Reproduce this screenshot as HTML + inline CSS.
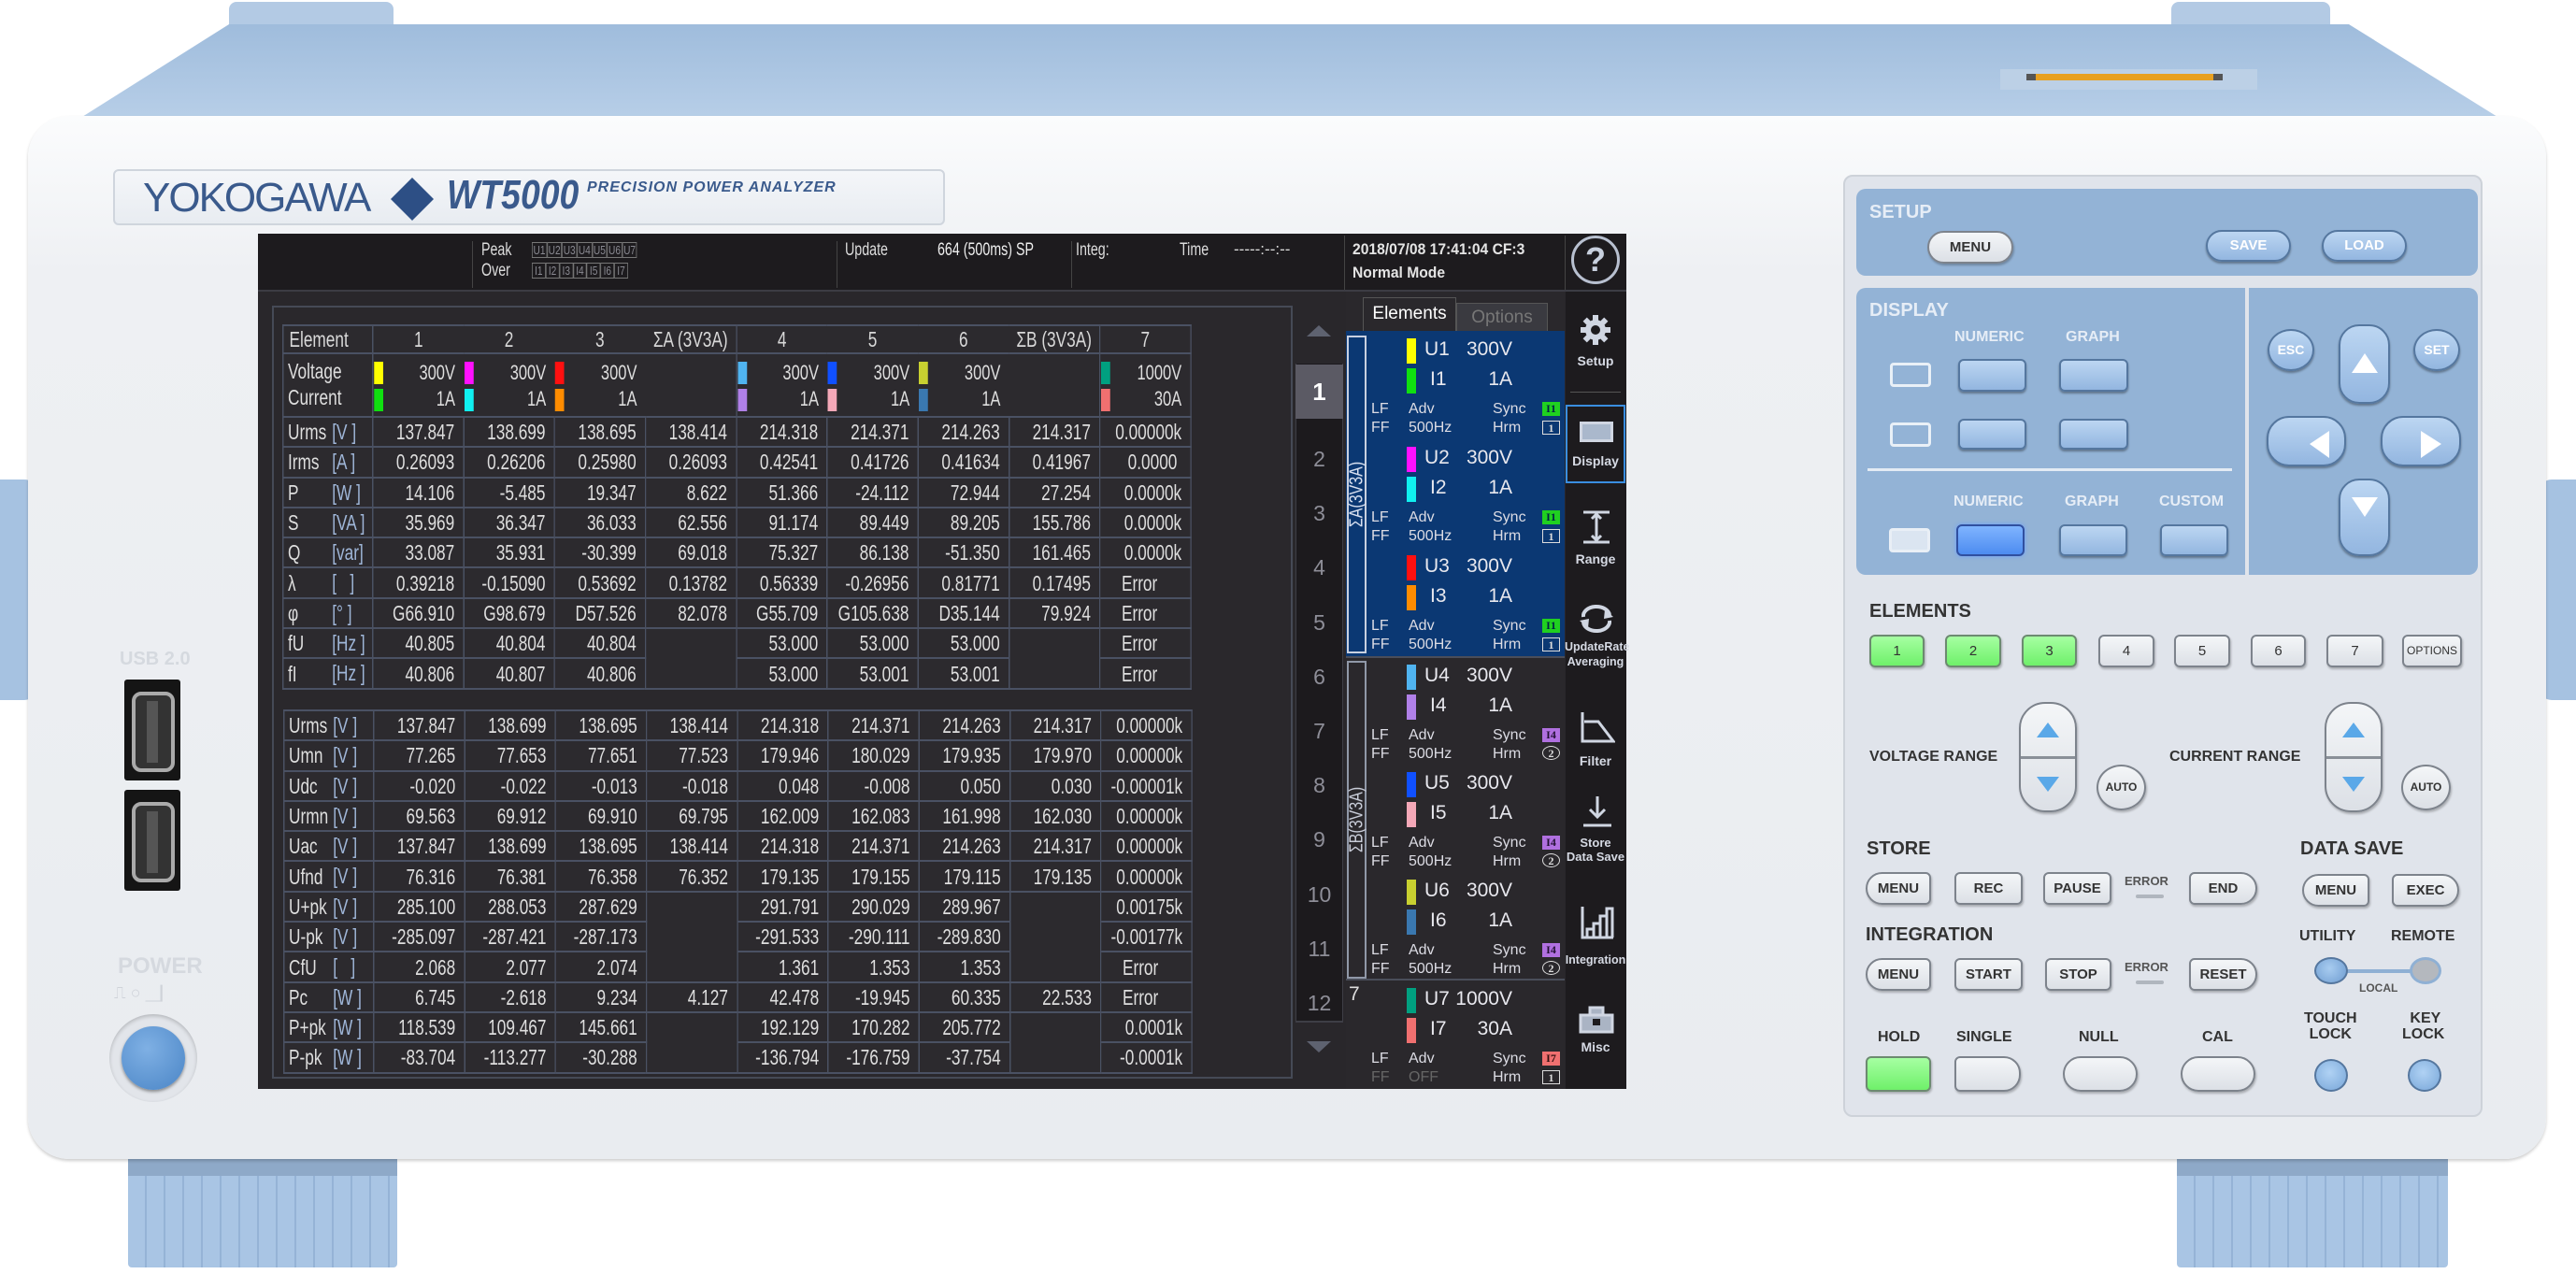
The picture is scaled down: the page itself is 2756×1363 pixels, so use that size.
<!DOCTYPE html>
<html><head><meta charset="utf-8">
<style>
*{margin:0;padding:0;box-sizing:border-box}
body{width:2756px;height:1363px;background:#fff;position:relative;overflow:hidden;font-family:"Liberation Sans",sans-serif}
.a{position:absolute}
.t{position:absolute;white-space:pre}
table{border-collapse:collapse;table-layout:fixed}
.tb td{border:2px solid #4a5163;color:#dedede;font-size:23px;height:32.3px;text-align:right;padding-right:12px;white-space:pre;line-height:28px;background:#2c2a2e;position:relative}
.tb td.l{text-align:left;padding-left:6px;padding-right:0}
.tb td.l span{position:absolute;left:69px;top:1px;color:#9fb6d8}
.tb td.e{text-align:left;padding-left:30px}
.tb tr.h td{height:27px;text-align:center;padding:0;color:#d8d8d8}
.tb td.nb{border-left-style:hidden}
.tb tr.vc td{height:68px}
.bar{position:absolute;width:13px;height:24px;left:1px}
.v1,.v2{position:absolute;right:12px;font-size:22px}
.v1{top:6px}.v2{top:34px}
.ep{position:absolute;left:1440px;width:233px;height:116px;color:#e8e8ee}
.ep .cb{position:absolute;left:65px;width:10px;height:27px}
.ep .n{position:absolute;font-size:21px;line-height:28px}
.ep .s{position:absolute;font-size:16px;line-height:20px;color:#dcdce4}
.ep .bd{position:absolute;left:210px;width:19px;height:15px;font:bold 12px "Liberation Serif",serif;text-align:center;line-height:15px}
.mn{position:absolute;left:1674px;width:66px;text-align:center;color:#d6dae4;font-weight:bold;font-size:14px;line-height:17px}
.lb{position:absolute;font-weight:bold;white-space:pre}
.btn{position:absolute;border-radius:6px;font-weight:bold;font-size:15px;text-align:center;color:#333}
.bb{background:linear-gradient(#bcd6f2,#93b6e0);border:2px solid #55779f;box-shadow:0 2px 2px rgba(0,0,0,.35)}
.gb{background:linear-gradient(#f4f6f8,#dce0e6);border:2px solid #7d838c;box-shadow:1px 2px 2px rgba(0,0,0,.25)}
.gr{background:linear-gradient(#a6ffa2,#6ff06a);border:2px solid #6c8a70;box-shadow:1px 2px 2px rgba(0,0,0,.25)}
.sq{position:absolute;width:44px;height:26px;border:3px solid #fff;border-radius:4px;opacity:.8}
</style></head><body>

<!-- lid -->
<svg class="a" style="left:0;top:0" width="2756" height="140">
<defs><linearGradient id="lg" x1="0" y1="0" x2="0" y2="1"><stop offset="0" stop-color="#9fbcdc"/><stop offset="1" stop-color="#b8cfe8"/></linearGradient></defs>
<rect x="245" y="2" width="176" height="36" rx="8" fill="#b3cae4"/>
<rect x="2323" y="2" width="170" height="36" rx="8" fill="#b3cae4"/>
<polygon points="80,130 245,26 2513,26 2680,130" fill="url(#lg)"/>
<rect x="2140" y="74" width="275" height="22" fill="#bcd0e6"/>
<rect x="2168" y="79" width="210" height="7" fill="#e8a020"/>
<rect x="2168" y="79" width="10" height="7" fill="#555"/><rect x="2368" y="79" width="10" height="7" fill="#555"/>
</svg>
<!-- side bumpers -->
<div class="a" style="left:0;top:513px;width:40px;height:236px;background:#a6c2e1;border-radius:0 14px 14px 0"></div>
<div class="a" style="left:2716px;top:513px;width:40px;height:236px;background:#a6c2e1;border-radius:14px 0 0 14px"></div>
<!-- feet -->
<div class="a" style="left:137px;top:1236px;width:288px;height:120px;background:repeating-linear-gradient(90deg,#a9c5e4 0 18px,#95b3d6 18px 20px);border-radius:4px"></div>
<div class="a" style="left:2329px;top:1236px;width:290px;height:120px;background:repeating-linear-gradient(90deg,#a9c5e4 0 18px,#95b3d6 18px 20px);border-radius:4px"></div>
<div class="a" style="left:137px;top:1236px;width:288px;height:22px;background:#8ea9c8"></div>
<div class="a" style="left:2329px;top:1236px;width:290px;height:22px;background:#8ea9c8"></div>
<!-- front panel -->
<div class="a" style="left:30px;top:124px;width:2694px;height:1116px;background:linear-gradient(#fbfcfd,#eef0f3 15%,#e9ecf0);border-radius:44px;box-shadow:0 2px 3px rgba(0,0,0,.2)"></div>
<!-- logo plate -->
<div class="a" style="left:121px;top:181px;width:890px;height:60px;background:linear-gradient(#f4f6f9,#e8ecf1);border:2px solid #cfd5dd;border-radius:6px"></div>
<div class="t" style="left:153px;top:187px;font-size:44px;color:#3a5a8c;letter-spacing:-2px">YOKOGAWA</div>
<svg class="a" style="left:418px;top:190px" width="46" height="46"><polygon points="23,0 46,23 23,46 0,23" fill="#2d4f85"/></svg>
<div class="t" style="left:478px;top:184px;font-size:44px;font-weight:bold;font-style:italic;color:#3a5a8c;transform:scaleX(.85);transform-origin:left">WT5000</div>
<div class="t" style="left:628px;top:192px;font-size:16px;font-weight:bold;font-style:italic;color:#3a5a8c;letter-spacing:1px">PRECISION POWER ANALYZER</div>

<!-- left: USB & power -->
<div class="t" style="left:128px;top:694px;font-size:20px;font-weight:bold;color:#d5d9df">USB 2.0</div>
<div class="a" style="left:133px;top:727px;width:60px;height:108px;background:#151515;border-radius:3px"></div>
<div class="a" style="left:141px;top:740px;width:46px;height:86px;border:4px solid #aaa;border-radius:10px;background:#333"></div>
<div class="a" style="left:157px;top:750px;width:12px;height:66px;background:#555"></div>
<div class="a" style="left:133px;top:845px;width:60px;height:108px;background:#151515;border-radius:3px"></div>
<div class="a" style="left:141px;top:858px;width:46px;height:86px;border:4px solid #aaa;border-radius:10px;background:#333"></div>
<div class="a" style="left:157px;top:868px;width:12px;height:66px;background:#555"></div>
<div class="t" style="left:126px;top:1020px;font-size:24px;font-weight:bold;color:#d5d9df">POWER</div>
<div class="t" style="left:122px;top:1052px;font-size:18px;color:#cfd3d9">⎍ ○ ⎽▏</div>
<div class="a" style="left:117px;top:1085px;width:94px;height:94px;border-radius:50%;background:#e2e5ea;box-shadow:inset 0 2px 4px rgba(0,0,0,.2)"></div>
<div class="a" style="left:130px;top:1098px;width:68px;height:68px;border-radius:50%;background:radial-gradient(circle at 40% 35%,#7fb0e4,#4a85c6);box-shadow:0 2px 3px rgba(0,0,0,.4)"></div>

<!-- SCREEN -->
<div class="a" style="left:276px;top:250px;width:1464px;height:915px;background:#29272b"></div>
<div class="a" style="left:276px;top:250px;width:1464px;height:62px;background:#1d1b1e;border-bottom:2px solid #3c3c44"></div>
<div class="a" style="left:505px;top:258px;width:1px;height:50px;background:#444"></div>
<div class="a" style="left:895px;top:258px;width:1px;height:50px;background:#444"></div>
<div class="a" style="left:1146px;top:258px;width:1px;height:50px;background:#444"></div>
<div class="a" style="left:1438px;top:252px;width:1px;height:58px;background:#444"></div>
<div class="a" style="left:1674px;top:252px;width:1px;height:58px;background:#444"></div>
<div class="t" style="left:515px;top:257px;font-size:19px;color:#ddd;transform:scaleX(.75);transform-origin:left">Peak</div>
<div class="t" style="left:515px;top:279px;font-size:19px;color:#ddd;transform:scaleX(.75);transform-origin:left">Over</div>
<div class="t" style="left:569px;top:260px;font-size:13px;color:#8a8a92;letter-spacing:0;transform:scaleX(.78);transform-origin:left"><span style="border:1px solid #777;padding:0 1px">U1</span><span style="border:1px solid #777;padding:0 1px">U2</span><span style="border:1px solid #777;padding:0 1px">U3</span><span style="border:1px solid #777;padding:0 1px">U4</span><span style="border:1px solid #777;padding:0 1px">U5</span><span style="border:1px solid #777;padding:0 1px">U6</span><span style="border:1px solid #777;padding:0 1px">U7</span></div>
<div class="t" style="left:569px;top:282px;font-size:13px;color:#8a8a92;transform:scaleX(.78);transform-origin:left"><span style="border:1px solid #777;padding:0 3px">I1</span><span style="border:1px solid #777;padding:0 3px">I2</span><span style="border:1px solid #777;padding:0 3px">I3</span><span style="border:1px solid #777;padding:0 3px">I4</span><span style="border:1px solid #777;padding:0 3px">I5</span><span style="border:1px solid #777;padding:0 3px">I6</span><span style="border:1px solid #777;padding:0 3px">I7</span></div>
<div class="t" style="left:904px;top:257px;font-size:19px;color:#ddd;transform:scaleX(.75);transform-origin:left">Update</div>
<div class="t" style="left:1003px;top:257px;font-size:19px;color:#eee;transform:scaleX(.75);transform-origin:left">664 (500ms) SP</div>
<div class="t" style="left:1151px;top:257px;font-size:19px;color:#ddd;transform:scaleX(.75);transform-origin:left">Integ:</div>
<div class="t" style="left:1262px;top:257px;font-size:19px;color:#ddd;transform:scaleX(.75);transform-origin:left">Time</div>
<div class="t" style="left:1320px;top:257px;font-size:17px;color:#ddd">-----:--:--</div>
<div class="t" style="left:1447px;top:257px;font-size:17px;color:#e4e4e4;font-weight:bold;transform:scaleX(.92);transform-origin:left">2018/07/08 17:41:04 CF:3</div>
<div class="t" style="left:1447px;top:282px;font-size:17px;color:#e4e4e4;font-weight:bold;transform:scaleX(.92);transform-origin:left">Normal Mode</div>
<div class="a" style="left:1681px;top:252px;width:52px;height:52px;border:3px solid #b8c0d0;border-radius:50%;color:#c8d0de;font-size:36px;font-weight:bold;text-align:center;line-height:46px">?</div>

<!-- numeric panel border -->
<div class="a" style="left:291px;top:327px;width:1092px;height:827px;border:2px solid #454a56;background:#2a282c"></div>

<div class="a" style="left:302px;top:347px;width:1295px;transform:scaleX(.75);transform-origin:left top">
<table class="tb" style="width:1295px">
<colgroup><col style="width:128px"><col span="9" style="width:129.67px"></colgroup>
<tr class="h"><td style="text-align:left;padding-left:8px">Element</td><td>1</td><td class="nb">2</td><td class="nb">3</td><td class="nb">ΣA (3V3A)</td><td>4</td><td class="nb">5</td><td class="nb">6</td><td class="nb">ΣB (3V3A)</td><td>7</td></tr>
<tr class="vc"><td class="l" style="line-height:28px;padding-top:4px;vertical-align:top">Voltage<br>Current</td>
<td><i class="bar" style="top:8px;background:#ffff00"></i><i class="bar" style="top:37px;background:#10e010"></i><b class="v1" style="font-weight:normal">300V</b><b class="v2" style="font-weight:normal">1A</b></td>
<td class="nb"><i class="bar" style="top:8px;background:#ff10ff"></i><i class="bar" style="top:37px;background:#10f0f0"></i><b class="v1" style="font-weight:normal">300V</b><b class="v2" style="font-weight:normal">1A</b></td>
<td class="nb"><i class="bar" style="top:8px;background:#ff1010"></i><i class="bar" style="top:37px;background:#ff8c00"></i><b class="v1" style="font-weight:normal">300V</b><b class="v2" style="font-weight:normal">1A</b></td>
<td class="nb"></td>
<td><i class="bar" style="top:8px;background:#50b4f0"></i><i class="bar" style="top:37px;background:#b080e8"></i><b class="v1" style="font-weight:normal">300V</b><b class="v2" style="font-weight:normal">1A</b></td>
<td class="nb"><i class="bar" style="top:8px;background:#1050ff"></i><i class="bar" style="top:37px;background:#f4a8b8"></i><b class="v1" style="font-weight:normal">300V</b><b class="v2" style="font-weight:normal">1A</b></td>
<td class="nb"><i class="bar" style="top:8px;background:#c8d030"></i><i class="bar" style="top:37px;background:#3a78b0"></i><b class="v1" style="font-weight:normal">300V</b><b class="v2" style="font-weight:normal">1A</b></td>
<td class="nb"></td>
<td><i class="bar" style="top:8px;background:#00a080"></i><i class="bar" style="top:37px;background:#f07070"></i><b class="v1" style="font-weight:normal">1000V</b><b class="v2" style="font-weight:normal">30A</b></td></tr>
<tr><td class="l">Urms<span>[V ]</span></td><td>137.847</td><td>138.699</td><td>138.695</td><td>138.414</td><td>214.318</td><td>214.371</td><td>214.263</td><td>214.317</td><td>0.00000k</td></tr>
<tr><td class="l">Irms<span>[A ]</span></td><td>0.26093</td><td>0.26206</td><td>0.25980</td><td>0.26093</td><td>0.42541</td><td>0.41726</td><td>0.41634</td><td>0.41967</td><td>0.0000 </td></tr>
<tr><td class="l">P<span>[W ]</span></td><td>14.106</td><td>-5.485</td><td>19.347</td><td>8.622</td><td>51.366</td><td>-24.112</td><td>72.944</td><td>27.254</td><td>0.0000k</td></tr>
<tr><td class="l">S<span>[VA ]</span></td><td>35.969</td><td>36.347</td><td>36.033</td><td>62.556</td><td>91.174</td><td>89.449</td><td>89.205</td><td>155.786</td><td>0.0000k</td></tr>
<tr><td class="l">Q<span>[var]</span></td><td>33.087</td><td>35.931</td><td>-30.399</td><td>69.018</td><td>75.327</td><td>86.138</td><td>-51.350</td><td>161.465</td><td>0.0000k</td></tr>
<tr><td class="l">λ<span>[   ]</span></td><td>0.39218</td><td>-0.15090</td><td>0.53692</td><td>0.13782</td><td>0.56339</td><td>-0.26956</td><td>0.81771</td><td>0.17495</td><td class="e">Error</td></tr>
<tr><td class="l">φ<span>[° ]</span></td><td>G66.910</td><td>G98.679</td><td>D57.526</td><td>82.078</td><td>G55.709</td><td>G105.638</td><td>D35.144</td><td>79.924</td><td class="e">Error</td></tr>
<tr><td class="l">fU<span>[Hz ]</span></td><td>40.805</td><td>40.804</td><td>40.804</td><td rowspan="2"></td><td>53.000</td><td>53.000</td><td>53.000</td><td rowspan="2"></td><td class="e">Error</td></tr>
<tr><td class="l">fI<span>[Hz ]</span></td><td>40.806</td><td>40.807</td><td>40.806</td><td>53.000</td><td>53.001</td><td>53.001</td><td class="e">Error</td></tr>
</table></div>

<div class="a" style="left:303px;top:759px;width:1295px;transform:scaleX(.75);transform-origin:left top">
<table class="tb" style="width:1295px">
<colgroup><col style="width:128px"><col span="9" style="width:129.67px"></colgroup>
<tr><td class="l">Urms<span>[V ]</span></td><td>137.847</td><td>138.699</td><td>138.695</td><td>138.414</td><td>214.318</td><td>214.371</td><td>214.263</td><td>214.317</td><td>0.00000k</td></tr>
<tr><td class="l">Umn<span>[V ]</span></td><td>77.265</td><td>77.653</td><td>77.651</td><td>77.523</td><td>179.946</td><td>180.029</td><td>179.935</td><td>179.970</td><td>0.00000k</td></tr>
<tr><td class="l">Udc<span>[V ]</span></td><td>-0.020</td><td>-0.022</td><td>-0.013</td><td>-0.018</td><td>0.048</td><td>-0.008</td><td>0.050</td><td>0.030</td><td>-0.00001k</td></tr>
<tr><td class="l">Urmn<span>[V ]</span></td><td>69.563</td><td>69.912</td><td>69.910</td><td>69.795</td><td>162.009</td><td>162.083</td><td>161.998</td><td>162.030</td><td>0.00000k</td></tr>
<tr><td class="l">Uac<span>[V ]</span></td><td>137.847</td><td>138.699</td><td>138.695</td><td>138.414</td><td>214.318</td><td>214.371</td><td>214.263</td><td>214.317</td><td>0.00000k</td></tr>
<tr><td class="l">Ufnd<span>[V ]</span></td><td>76.316</td><td>76.381</td><td>76.358</td><td>76.352</td><td>179.135</td><td>179.155</td><td>179.115</td><td>179.135</td><td>0.00000k</td></tr>
<tr><td class="l">U+pk<span>[V ]</span></td><td>285.100</td><td>288.053</td><td>287.629</td><td rowspan="3"></td><td>291.791</td><td>290.029</td><td>289.967</td><td rowspan="3"></td><td>0.00175k</td></tr>
<tr><td class="l">U-pk<span>[V ]</span></td><td>-285.097</td><td>-287.421</td><td>-287.173</td><td>-291.533</td><td>-290.111</td><td>-289.830</td><td>-0.00177k</td></tr>
<tr><td class="l">CfU<span>[   ]</span></td><td>2.068</td><td>2.077</td><td>2.074</td><td>1.361</td><td>1.353</td><td>1.353</td><td class="e">Error</td></tr>
<tr><td class="l">Pc<span>[W ]</span></td><td>6.745</td><td>-2.618</td><td>9.234</td><td>4.127</td><td>42.478</td><td>-19.945</td><td>60.335</td><td>22.533</td><td class="e">Error</td></tr>
<tr><td class="l">P+pk<span>[W ]</span></td><td>118.539</td><td>109.467</td><td>145.661</td><td rowspan="2"></td><td>192.129</td><td>170.282</td><td>205.772</td><td rowspan="2"></td><td>0.0001k</td></tr>
<tr><td class="l">P-pk<span>[W ]</span></td><td>-83.704</td><td>-113.277</td><td>-30.288</td><td>-136.794</td><td>-176.759</td><td>-37.754</td><td>-0.0001k</td></tr>
</table></div>

<!-- scroll column -->
<div class="a" style="left:1386px;top:327px;width:51px;height:827px;background:#1c1a1d;border:1px solid #3e3e46"></div>
<div class="a" style="left:1386px;top:327px;width:51px;height:62px;background:#29272b"></div>
<svg class="a" style="left:1396px;top:346px" width="30" height="16"><polygon points="15,2 28,14 2,14" fill="#5e6270"/></svg>
<div class="a" style="left:1386px;top:390px;width:51px;height:58px;background:#5b5a64;color:#fff;font-size:26px;font-weight:bold;text-align:center;line-height:58px">1</div>
<div class="a" style="left:1386px;top:1092px;width:51px;height:62px;background:#29272b;border-top:2px solid #3e3e46"></div>
<svg class="a" style="left:1396px;top:1112px" width="30" height="16"><polygon points="2,2 28,2 15,14" fill="#5e6270"/></svg>
<div class="a" style="left:1386px;top:462px;width:51px;color:#8e8e98;font-size:23px;text-align:center;line-height:58.2px">2<br>3<br>4<br>5<br>6<br>7<br>8<br>9<br>10<br>11<br>12</div>

<!-- element panel -->
<div class="a" style="left:1440px;top:312px;width:234px;height:853px;background:#2a282c"></div>
<div class="a" style="left:1458px;top:318px;width:100px;height:37px;background:#2a282c;border:1px solid #555;border-bottom:0;color:#fff;font-size:19px;text-align:center;line-height:34px">Elements</div>
<div class="a" style="left:1558px;top:324px;width:98px;height:31px;background:#3a3a40;border:1px solid #555;color:#777;font-size:19px;text-align:center;line-height:30px">Options</div>
<div class="a" style="left:1440px;top:354px;width:234px;height:348px;background:#0b3873"></div>
<div class="a" style="left:1440px;top:702px;width:234px;height:2px;background:#4a4e5a"></div>
<div class="a" style="left:1440px;top:1047px;width:234px;height:2px;background:#4a4e5a"></div>
<div class="a" style="left:1441px;top:359px;width:21px;height:340px;border:2px solid #c8d0e0"></div>
<div class="a" style="left:1441px;top:707px;width:21px;height:340px;border:2px solid #9098a8"></div>
<div class="t" style="left:1452px;top:529px;font-size:20px;color:#d8e0f0;transform:translate(-50%,-50%) rotate(-90deg) scaleX(.8)">ΣA(3V3A)</div>
<div class="t" style="left:1452px;top:877px;font-size:20px;color:#c8ccd8;transform:translate(-50%,-50%) rotate(-90deg) scaleX(.8)">ΣB(3V3A)</div>
<div class="t" style="left:1443px;top:1052px;font-size:21px;color:#ddd">7</div>

<div class="ep" style="top:354px"><i class="cb" style="top:8px;background:#ffff00"></i><i class="cb" style="top:40px;background:#10e010"></i><span class="n" style="left:84px;top:6px">U1</span><span class="n" style="left:90px;top:38px">I1</span><span class="n" style="left:100px;width:78px;text-align:right;top:6px">300V</span><span class="n" style="left:100px;width:78px;text-align:right;top:38px">1A</span><span class="s" style="left:27px;top:74px">LF<br>FF</span><span class="s" style="left:67px;top:74px">Adv<br>500Hz</span><span class="s" style="left:157px;top:74px">Sync<br>Hrm</span><span class="bd" style="top:76px;background:#20d020;color:#024">I1</span><span class="bd" style="top:96px;border:1px solid #ddd;color:#ddd">1</span></div>
<div class="ep" style="top:470px"><i class="cb" style="top:8px;background:#ff10ff"></i><i class="cb" style="top:40px;background:#10f0f0"></i><span class="n" style="left:84px;top:6px">U2</span><span class="n" style="left:90px;top:38px">I2</span><span class="n" style="left:100px;width:78px;text-align:right;top:6px">300V</span><span class="n" style="left:100px;width:78px;text-align:right;top:38px">1A</span><span class="s" style="left:27px;top:74px">LF<br>FF</span><span class="s" style="left:67px;top:74px">Adv<br>500Hz</span><span class="s" style="left:157px;top:74px">Sync<br>Hrm</span><span class="bd" style="top:76px;background:#20d020;color:#024">I1</span><span class="bd" style="top:96px;border:1px solid #ddd;color:#ddd">1</span></div>
<div class="ep" style="top:586px"><i class="cb" style="top:8px;background:#ff1010"></i><i class="cb" style="top:40px;background:#ff8c00"></i><span class="n" style="left:84px;top:6px">U3</span><span class="n" style="left:90px;top:38px">I3</span><span class="n" style="left:100px;width:78px;text-align:right;top:6px">300V</span><span class="n" style="left:100px;width:78px;text-align:right;top:38px">1A</span><span class="s" style="left:27px;top:74px">LF<br>FF</span><span class="s" style="left:67px;top:74px">Adv<br>500Hz</span><span class="s" style="left:157px;top:74px">Sync<br>Hrm</span><span class="bd" style="top:76px;background:#20d020;color:#024">I1</span><span class="bd" style="top:96px;border:1px solid #ddd;color:#ddd">1</span></div>
<div class="ep" style="top:703px"><i class="cb" style="top:8px;background:#50b4f0"></i><i class="cb" style="top:40px;background:#b080e8"></i><span class="n" style="left:84px;top:6px">U4</span><span class="n" style="left:90px;top:38px">I4</span><span class="n" style="left:100px;width:78px;text-align:right;top:6px">300V</span><span class="n" style="left:100px;width:78px;text-align:right;top:38px">1A</span><span class="s" style="left:27px;top:74px">LF<br>FF</span><span class="s" style="left:67px;top:74px">Adv<br>500Hz</span><span class="s" style="left:157px;top:74px">Sync<br>Hrm</span><span class="bd" style="top:76px;background:#b070e0;color:#213">I4</span><span class="bd" style="top:95px;border:1px solid #ddd;border-radius:50%;color:#ddd">2</span></div>
<div class="ep" style="top:818px"><i class="cb" style="top:8px;background:#1050ff"></i><i class="cb" style="top:40px;background:#f4a8b8"></i><span class="n" style="left:84px;top:6px">U5</span><span class="n" style="left:90px;top:38px">I5</span><span class="n" style="left:100px;width:78px;text-align:right;top:6px">300V</span><span class="n" style="left:100px;width:78px;text-align:right;top:38px">1A</span><span class="s" style="left:27px;top:74px">LF<br>FF</span><span class="s" style="left:67px;top:74px">Adv<br>500Hz</span><span class="s" style="left:157px;top:74px">Sync<br>Hrm</span><span class="bd" style="top:76px;background:#b070e0;color:#213">I4</span><span class="bd" style="top:95px;border:1px solid #ddd;border-radius:50%;color:#ddd">2</span></div>
<div class="ep" style="top:933px"><i class="cb" style="top:8px;background:#c8d030"></i><i class="cb" style="top:40px;background:#3a78b0"></i><span class="n" style="left:84px;top:6px">U6</span><span class="n" style="left:90px;top:38px">I6</span><span class="n" style="left:100px;width:78px;text-align:right;top:6px">300V</span><span class="n" style="left:100px;width:78px;text-align:right;top:38px">1A</span><span class="s" style="left:27px;top:74px">LF<br>FF</span><span class="s" style="left:67px;top:74px">Adv<br>500Hz</span><span class="s" style="left:157px;top:74px">Sync<br>Hrm</span><span class="bd" style="top:76px;background:#b070e0;color:#213">I4</span><span class="bd" style="top:95px;border:1px solid #ddd;border-radius:50%;color:#ddd">2</span></div>
<div class="ep" style="top:1049px"><i class="cb" style="top:8px;background:#00a080"></i><i class="cb" style="top:40px;background:#f07070"></i><span class="n" style="left:84px;top:6px">U7</span><span class="n" style="left:90px;top:38px">I7</span><span class="n" style="left:100px;width:78px;text-align:right;top:6px">1000V</span><span class="n" style="left:100px;width:78px;text-align:right;top:38px">30A</span><span class="s" style="left:27px;top:74px">LF<br><span style="color:#666">FF</span></span><span class="s" style="left:67px;top:74px">Adv<br><span style="color:#666">OFF</span></span><span class="s" style="left:157px;top:74px">Sync<br>Hrm</span><span class="bd" style="top:76px;background:#f07070;color:#311">I7</span><span class="bd" style="top:96px;border:1px solid #ddd;color:#ddd">1</span></div>

<!-- right menu -->
<div class="a" style="left:1675px;top:312px;width:65px;height:853px;background:#1d1b1e"></div>
<div class="a" style="left:1680px;top:419px;width:54px;height:1px;background:#555"></div>
<div class="a" style="left:1675px;top:433px;width:64px;height:84px;border:2px solid #3a8ee0"></div>
<svg class="a" style="left:1690px;top:336px" width="34" height="34" viewBox="0 0 34 34"><g fill="#d0d6e2"><circle cx="17" cy="17" r="11"/><rect x="14" y="1" width="6" height="32"/><rect x="1" y="14" width="32" height="6"/><rect x="14" y="1" width="6" height="32" transform="rotate(45 17 17)"/><rect x="14" y="1" width="6" height="32" transform="rotate(-45 17 17)"/></g><circle cx="17" cy="17" r="5" fill="#1d1b1e"/></svg>
<div class="mn" style="top:378px">Setup</div>
<div class="a" style="left:1690px;top:451px;width:36px;height:22px;border:3px solid #d0d6e2;background:#aab8cc"></div>
<div class="mn" style="top:485px">Display</div>
<svg class="a" style="left:1692px;top:546px" width="32" height="36"><g stroke="#d0d6e2" stroke-width="3" fill="none"><path d="M2 2H30M2 34H30M16 4V32M11 9L16 4L21 9M11 27L16 32L21 27"/></g></svg>
<div class="mn" style="top:590px">Range</div>
<svg class="a" style="left:1689px;top:646px" width="38" height="32"><g stroke="#d0d6e2" stroke-width="4" fill="none"><path d="M5 14A14 10 0 0 1 33 12M33 18A14 10 0 0 1 5 20"/></g><path d="M28 6L37 14L27 16Z M10 26L1 18L11 16Z" fill="#d0d6e2"/></svg>
<div class="mn" style="top:684px;font-size:12.5px;line-height:16px">UpdateRate<br>Averaging</div>
<svg class="a" style="left:1690px;top:760px" width="38" height="36"><path d="M3 2V33H36L20 12H5" stroke="#d0d6e2" stroke-width="3" fill="none"/></svg>
<div class="mn" style="top:806px">Filter</div>
<svg class="a" style="left:1692px;top:850px" width="34" height="36"><g stroke="#d0d6e2" stroke-width="3" fill="none"><path d="M17 2V24M9 16L17 24L25 16M2 33H32"/></g></svg>
<div class="mn" style="top:894px;font-size:13px;line-height:15px">Store<br>Data Save</div>
<svg class="a" style="left:1690px;top:968px" width="38" height="38"><g stroke="#d0d6e2" stroke-width="3" fill="none"><path d="M3 2V35H36M8 35V26H15V35M15 35V20H22V35M22 35V12H29V35M29 35V4H35V35"/></g></svg>
<div class="mn" style="top:1019px;font-size:12.5px">Integration</div>
<svg class="a" style="left:1689px;top:1072px" width="38" height="34"><path d="M2 14H36V32H2Z M12 14V6H26V14" stroke="#d0d6e2" stroke-width="3" fill="#aab4c4"/><rect x="15" y="18" width="8" height="7" fill="#1d1b1e"/></svg>
<div class="mn" style="top:1112px">Misc</div>

<!-- CONTROL PANEL -->
<div class="a" style="left:1972px;top:187px;width:684px;height:1008px;background:#e0e4eb;border:2px solid #cdd2d9;border-radius:10px"></div>
<div class="a" style="left:1986px;top:202px;width:665px;height:93px;background:#93b3d6;border-radius:10px"></div>
<div class="a" style="left:1986px;top:308px;width:416px;height:307px;background:#93b3d6;border-radius:10px 0 0 10px"></div>
<div class="a" style="left:2406px;top:308px;width:245px;height:307px;background:#93b3d6;border-radius:0 10px 10px 0"></div>
<div class="lb" style="left:2000px;top:216px;font-size:20px;color:#e6edf6">SETUP</div>
<div class="btn gb" style="left:2062px;top:247px;width:92px;height:35px;border-radius:18px;line-height:31px">MENU</div>
<div class="btn bb" style="left:2360px;top:246px;width:91px;height:34px;border-radius:18px;line-height:30px;color:#fff">SAVE</div>
<div class="btn bb" style="left:2484px;top:246px;width:91px;height:34px;border-radius:18px;line-height:30px;color:#fff">LOAD</div>
<div class="lb" style="left:2000px;top:321px;font-size:20px;color:#e6edf6">DISPLAY</div>
<div class="lb" style="left:2091px;top:352px;font-size:16px;color:#e6edf6">NUMERIC</div>
<div class="lb" style="left:2210px;top:352px;font-size:16px;color:#e6edf6">GRAPH</div>
<div class="sq" style="left:2022px;top:388px"></div><div class="sq" style="left:2022px;top:452px"></div>
<div class="btn bb" style="left:2095px;top:384px;width:73px;height:35px"></div>
<div class="btn bb" style="left:2203px;top:384px;width:74px;height:35px"></div>
<div class="btn bb" style="left:2095px;top:448px;width:73px;height:33px"></div>
<div class="btn bb" style="left:2203px;top:448px;width:74px;height:33px"></div>
<div class="a" style="left:1998px;top:501px;width:390px;height:3px;background:#e3ebf4"></div>
<div class="lb" style="left:2090px;top:528px;font-size:16px;color:#e6edf6">NUMERIC</div>
<div class="lb" style="left:2209px;top:528px;font-size:16px;color:#e6edf6">GRAPH</div>
<div class="lb" style="left:2310px;top:528px;font-size:16px;color:#e6edf6">CUSTOM</div>
<div class="sq" style="left:2021px;top:565px;background:#eef2f8"></div>
<div class="btn" style="left:2093px;top:561px;width:73px;height:34px;background:linear-gradient(#7fb4ff,#4d8cf0);border:2px solid #3050a0;box-shadow:0 0 5px #6aa0ff"></div>
<div class="btn bb" style="left:2203px;top:561px;width:73px;height:34px"></div>
<div class="btn bb" style="left:2311px;top:561px;width:73px;height:34px"></div>
<!-- nav -->
<div class="btn bb" style="left:2426px;top:352px;width:50px;height:45px;border-radius:50%;line-height:41px;color:#fff;font-size:14px">ESC</div>
<div class="btn bb" style="left:2582px;top:352px;width:50px;height:45px;border-radius:50%;line-height:41px;color:#fff;font-size:14px">SET</div>
<div class="btn bb" style="left:2502px;top:347px;width:55px;height:85px;border-radius:22px"></div>
<div class="btn bb" style="left:2502px;top:512px;width:55px;height:83px;border-radius:22px"></div>
<div class="btn bb" style="left:2425px;top:445px;width:85px;height:54px;border-radius:24px"></div>
<div class="btn bb" style="left:2547px;top:445px;width:86px;height:54px;border-radius:24px"></div>
<svg class="a" style="left:2400px;top:330px" width="260" height="280"><g fill="#fff"><polygon points="130,48 144,69 116,69"/><polygon points="116,202 144,202 130,223"/><polygon points="71,145 92,131 92,160"/><polygon points="190,131 190,160 212,145"/></g></svg>
<!-- elements -->
<div class="lb" style="left:2000px;top:643px;font-size:20px;color:#333">ELEMENTS</div>
<div class="btn gr" style="left:2000px;top:679px;width:59px;height:35px;line-height:31px;font-weight:normal">1</div>
<div class="btn gr" style="left:2081px;top:679px;width:60px;height:35px;line-height:31px;font-weight:normal">2</div>
<div class="btn gr" style="left:2163px;top:679px;width:59px;height:35px;line-height:31px;font-weight:normal">3</div>
<div class="btn gb" style="left:2245px;top:679px;width:60px;height:35px;line-height:31px;font-weight:normal">4</div>
<div class="btn gb" style="left:2326px;top:679px;width:60px;height:35px;line-height:31px;font-weight:normal">5</div>
<div class="btn gb" style="left:2408px;top:679px;width:59px;height:35px;line-height:31px;font-weight:normal">6</div>
<div class="btn gb" style="left:2489px;top:679px;width:61px;height:35px;line-height:31px;font-weight:normal">7</div>
<div class="btn gb" style="left:2570px;top:679px;width:64px;height:35px;line-height:31px;font-size:12px;font-weight:normal">OPTIONS</div>
<!-- ranges -->
<div class="lb" style="left:2000px;top:801px;font-size:16px;color:#333">VOLTAGE RANGE</div>
<div class="lb" style="left:2321px;top:801px;font-size:16px;color:#333">CURRENT RANGE</div>
<div class="btn gb" style="left:2160px;top:751px;width:62px;height:118px;border-radius:28px"></div>
<div class="btn gb" style="left:2487px;top:751px;width:62px;height:118px;border-radius:28px"></div>
<div class="a" style="left:2162px;top:809px;width:58px;height:3px;background:#8a9098"></div>
<div class="a" style="left:2489px;top:809px;width:58px;height:3px;background:#8a9098"></div>
<svg class="a" style="left:2160px;top:751px" width="390" height="120"><g fill="#5aa8e8"><polygon points="31,22 43,38 19,38"/><polygon points="19,80 43,80 31,96"/><polygon points="358,22 370,38 346,38"/><polygon points="346,80 370,80 358,96"/></g></svg>
<div class="btn gb" style="left:2243px;top:818px;width:53px;height:49px;border-radius:50%;font-size:12px;line-height:45px">AUTO</div>
<div class="btn gb" style="left:2569px;top:818px;width:53px;height:49px;border-radius:50%;font-size:12px;line-height:45px">AUTO</div>
<!-- store -->
<div class="lb" style="left:1997px;top:897px;font-size:20px;color:#333">STORE</div>
<div class="lb" style="left:2461px;top:897px;font-size:20px;color:#333">DATA SAVE</div>
<div class="btn gb" style="left:1996px;top:933px;width:70px;height:35px;border-radius:18px 6px 6px 18px;line-height:31px">MENU</div>
<div class="btn gb" style="left:2091px;top:933px;width:73px;height:35px;line-height:31px">REC</div>
<div class="btn gb" style="left:2186px;top:933px;width:73px;height:35px;line-height:31px">PAUSE</div>
<div class="lb" style="left:2273px;top:935px;font-size:13px;color:#555">ERROR</div>
<div class="a" style="left:2285px;top:957px;width:30px;height:4px;background:#b0b6be;border-radius:2px"></div>
<div class="btn gb" style="left:2342px;top:933px;width:73px;height:35px;border-radius:6px 18px 18px 6px;line-height:31px">END</div>
<div class="btn gb" style="left:2463px;top:935px;width:72px;height:35px;border-radius:18px 6px 6px 18px;line-height:31px">MENU</div>
<div class="btn gb" style="left:2559px;top:935px;width:72px;height:35px;border-radius:6px 18px 18px 6px;line-height:31px">EXEC</div>
<!-- integration -->
<div class="lb" style="left:1996px;top:989px;font-size:20px;color:#333">INTEGRATION</div>
<div class="btn gb" style="left:1996px;top:1025px;width:70px;height:35px;border-radius:18px 6px 6px 18px;line-height:31px">MENU</div>
<div class="btn gb" style="left:2091px;top:1025px;width:73px;height:35px;line-height:31px">START</div>
<div class="btn gb" style="left:2188px;top:1025px;width:71px;height:35px;line-height:31px">STOP</div>
<div class="lb" style="left:2273px;top:1027px;font-size:13px;color:#555">ERROR</div>
<div class="a" style="left:2285px;top:1049px;width:30px;height:4px;background:#b0b6be;border-radius:2px"></div>
<div class="btn gb" style="left:2342px;top:1025px;width:73px;height:35px;border-radius:6px 18px 18px 6px;line-height:31px">RESET</div>
<div class="lb" style="left:2460px;top:993px;font-size:16px;color:#333">UTILITY</div>
<div class="lb" style="left:2558px;top:993px;font-size:16px;color:#333">REMOTE</div>
<div class="a" style="left:2494px;top:1037px;width:100px;height:4px;background:#8fb0d4"></div>
<div class="a" style="left:2476px;top:1024px;width:36px;height:29px;border-radius:50%;background:radial-gradient(circle at 45% 40%,#a8ccf0,#6e9cd0);border:2px solid #55779f"></div>
<div class="a" style="left:2578px;top:1024px;width:34px;height:29px;border-radius:50%;background:#b4b8be;border:3px solid #8fb0d4"></div>
<div class="lb" style="left:2524px;top:1050px;font-size:12px;color:#555">LOCAL</div>
<!-- bottom row -->
<div class="lb" style="left:2009px;top:1101px;font-size:16px;color:#333">HOLD</div>
<div class="lb" style="left:2093px;top:1101px;font-size:16px;color:#333">SINGLE</div>
<div class="lb" style="left:2224px;top:1101px;font-size:16px;color:#333">NULL</div>
<div class="lb" style="left:2356px;top:1101px;font-size:16px;color:#333">CAL</div>
<div class="lb" style="left:2465px;top:1081px;font-size:16px;line-height:17px;color:#333;text-align:center">TOUCH<br>LOCK</div>
<div class="lb" style="left:2570px;top:1081px;font-size:16px;line-height:17px;color:#333;text-align:center"> KEY<br>LOCK</div>
<div class="btn gr" style="left:1996px;top:1130px;width:70px;height:38px"></div>
<div class="btn gb" style="left:2091px;top:1130px;width:71px;height:38px;border-radius:6px 18px 18px 6px"></div>
<div class="btn gb" style="left:2207px;top:1130px;width:80px;height:38px;border-radius:19px"></div>
<div class="btn gb" style="left:2333px;top:1130px;width:80px;height:38px;border-radius:19px"></div>
<div class="a" style="left:2476px;top:1133px;width:36px;height:35px;border-radius:50%;background:radial-gradient(circle at 45% 40%,#b0d2f4,#78a6d8);border:2px solid #55779f"></div>
<div class="a" style="left:2576px;top:1133px;width:36px;height:35px;border-radius:50%;background:radial-gradient(circle at 45% 40%,#b0d2f4,#78a6d8);border:2px solid #55779f"></div>
</body></html>
